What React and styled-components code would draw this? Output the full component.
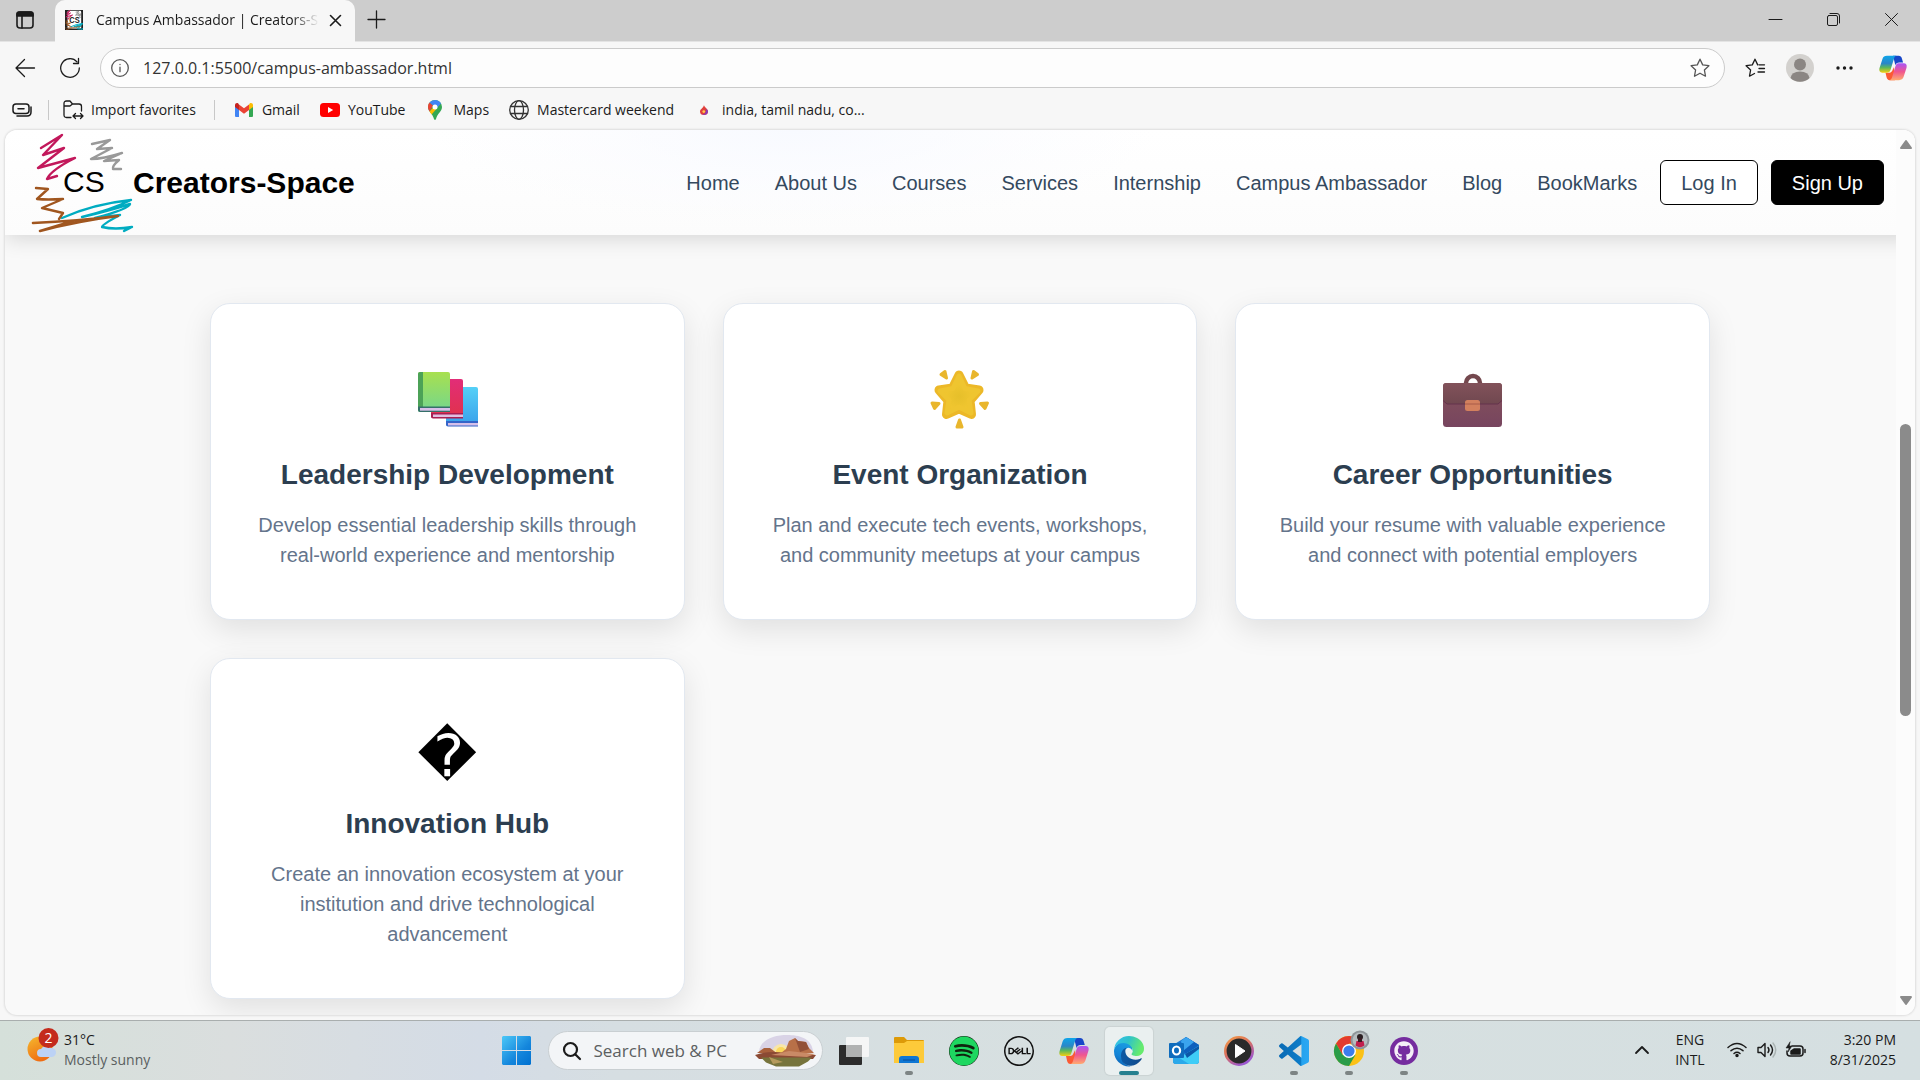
import React from "react";
import styled, { createGlobalStyle } from "styled-components";
import { FaSpotify, FaGithub } from "react-icons/fa";
import { SiDell } from "react-icons/si";

const ui = `"Open Sans", "Noto Sans", sans-serif`;
const arial = `"Liberation Sans", Arial, sans-serif`;

const GlobalStyle = createGlobalStyle`
  *, *::before, *::after { box-sizing: border-box; }
  body { margin: 0; background: #f7f7f7; overflow: hidden; }
  button, input { font: inherit; color: inherit; margin: 0; padding: 0; border: 0; background: none; }
  svg { display: block; flex: none; overflow: visible; }
  a { color: inherit; text-decoration: none; }
  h3, p, ul { margin: 0; padding: 0; }
`;

const Desktop = styled.div`
  height: 100vh;
  display: flex;
  flex-direction: column;
  font-family: ${ui};
  font-size: 14px;
  color: #1b1b1b;
`;

/* ---------- window chrome ---------- */

const TabStrip = styled.header`
  height: 42px;
  flex: none;
  display: flex;
  background: #cdcdcd;
  border-bottom: 1px solid #e4e4e4;
`;

const StripButton = styled.button`
  width: ${(p) => p.$w}px;
  height: 100%;
  padding-bottom: 2px;
  display: flex;
  align-items: center;
  justify-content: center;
`;

const Tab = styled.div`
  width: 300px;
  height: 42px;
  margin-left: ${(p) => p.$left}px;
  padding: 0 14px 2px 10px;
  display: flex;
  align-items: center;
  background: #f7f7f7;
  border-radius: 10px 10px 0 0;
`;

const TabTitle = styled.span`
  flex: 1;
  margin-left: 13px;
  margin-right: 11px;
  line-height: 20px;
  white-space: nowrap;
  overflow: hidden;
  mask-image: linear-gradient(to right, #000 88%, transparent 100%);
`;

const WindowButtons = styled.div`
  margin-left: auto;
  display: flex;
`;

const Toolbar = styled.div`
  flex: none;
  height: 52px;
  padding: 0 5px 0 2px;
  display: flex;
  align-items: center;
  background: #f7f7f7;
`;

const ToolButton = styled.button`
  width: 45px;
  height: 40px;
  display: flex;
  align-items: center;
  justify-content: center;
`;

const ToolGroup = styled.div`
  display: flex;
  margin-right: 3px;
`;

const AddressBar = styled.label`
  flex: 1;
  height: 40px;
  margin: 0 7px 0 8px;
  padding: 0 14px 0 10px;
  display: flex;
  align-items: center;
  gap: 14px;
  background: #fdfdfd;
  border: 1px solid #cbcbcb;
  border-radius: 20px;
`;

const AddressInput = styled.input`
  flex: 1;
  font-size: 16px;
  line-height: 24px;
  color: #333;
  outline: none;
`;

const Bookmarks = styled.nav`
  flex: none;
  height: 36px;
  padding: 0 12px 4px;
  display: flex;
  align-items: center;
  background: #f7f7f7;
`;

const Divider = styled.span`
  width: 1px;
  height: 20px;
  margin: 0 ${(p) => p.$right}px 0 ${(p) => p.$left}px;
  background: #c8c8c8;
`;

const Bookmark = styled.a`
  display: flex;
  align-items: center;
  gap: 8px;
  margin-right: ${(p) => p.$after || 20}px;
  line-height: 20px;
  white-space: nowrap;
`;

const IconSlot = styled.span`
  width: 20px;
  display: flex;
  justify-content: center;
`;

/* ---------- web page ---------- */

const PageFrame = styled.div`
  flex: 1;
  min-height: 0;
  padding: 0 5px 5px;
  background: #f7f7f7;
`;

const Page = styled.div`
  position: relative;
  height: 100%;
  overflow: hidden;
  background: #f9f9f9;
  border-radius: 12px;
  box-shadow: 0 0 2px 1px #dedede;
  font-family: ${arial};
`;

const SiteNav = styled.nav`
  position: relative;
  height: 105px;
  padding: 0 31px 0 28px;
  display: flex;
  align-items: center;
  justify-content: space-between;
  background:
    radial-gradient(ellipse 360px 100px at 790px 0, #f8faff 0, rgba(250, 251, 255, 0.5) 60%, transparent 100%),
    linear-gradient(#fff, #fcfcfc);
  box-shadow: 0 4px 20px rgba(0, 0, 0, 0.14);
`;

const Brand = styled.a`
  display: flex;
  align-items: center;
  font-size: 30px;
  font-weight: 700;
  line-height: 36px;
  color: #000;
`;

const NavSide = styled.div`
  display: flex;
  align-items: center;
  gap: 13px;
  font-size: 20px;
  line-height: 24px;
  color: #34495e;
`;

const NavLinks = styled.ul`
  display: flex;
  gap: 35px;
  margin-right: 10px;
  list-style: none;
`;

const NavButton = styled.button`
  height: 45px;
  padding: 0 20px;
  border: 1px solid #000;
  border-radius: 6px;
  background: ${(p) => (p.$solid ? "#000" : "#fff")};
  color: ${(p) => (p.$solid ? "#fff" : "#34495e")};
`;

const CardGrid = styled.main`
  max-width: 1500px;
  margin: 0 auto;
  padding-top: 68px;
  display: grid;
  grid-template-columns: repeat(3, 1fr);
  gap: 38px;
`;

const Card = styled.article`
  padding: 48px 38px 49px;
  display: flex;
  flex-direction: column;
  align-items: center;
  text-align: center;
  background: #fff;
  border: 1px solid #e2e8f0;
  border-radius: 20px;
  box-shadow: 0 10px 30px rgba(0, 0, 0, 0.1);
`;

const CardGlyph = styled.div`
  padding-top: 18px;
  font-family: "DejaVu Sans", sans-serif;
  font-size: 58px;
  line-height: 62px;
  color: #000;
`;

const CardTitle = styled.h3`
  margin: 21px 0 19px;
  font-size: 28px;
  line-height: 32px;
  color: #2c3e50;
`;

const CardText = styled.p`
  font-size: 20px;
  line-height: 30px;
  color: #64748b;
`;

const Scrollbar = styled.div`
  position: absolute;
  inset: 0 0 0 auto;
  width: 19px;
  padding: 10px 4px;
  display: flex;
  flex-direction: column;
  align-items: center;
  background: #fcfcfc;
`;

const ScrollTrack = styled.div`
  flex: 1;
  width: 11px;
  padding-top: 275px;
`;

const ScrollThumb = styled.div`
  height: 292px;
  border-radius: 6px;
  background: #8b8b8b;
`;

/* ---------- taskbar ---------- */

const Taskbar = styled.footer`
  flex: none;
  height: 60px;
  display: grid;
  grid-template-columns: 1fr auto 1fr;
  align-items: center;
  border-top: 1px solid #a9aeae;
  background: linear-gradient(to right, #d5e0da 0, #dadede 12%, #d4dce6 25%, #d6dee2 32%, #d7e0e0 60%, #d5dfe1 100%);
  line-height: 20px;
`;

const Weather = styled.button`
  justify-self: start;
  padding: 0 0 2px 26px;
  display: flex;
  align-items: center;
  gap: 4px;
  text-align: left;
`;

const Muted = styled.div`
  color: #5a6060;
`;

const TaskGroup = styled.div`
  display: flex;
  align-items: center;
  gap: 7px;
`;

const TaskButton = styled.button`
  width: 48px;
  height: 48px;
  position: relative;
  display: flex;
  align-items: center;
  justify-content: center;
  border-radius: 5px;
  background: ${(p) => (p.$active ? "#eaf0f0" : "none")};
  box-shadow: ${(p) => (p.$active ? "0 0 1px 1px rgba(0,0,0,.06)" : "none")};
  &::after {
    content: "";
    display: ${(p) => (p.$active || p.$open ? "block" : "none")};
    position: absolute;
    bottom: 0;
    width: ${(p) => (p.$active ? 20 : 8)}px;
    height: 4px;
    border-radius: 2px;
    background: ${(p) => (p.$active ? "#26808f" : "#7d8484")};
  }
`;

const TaskSearch = styled.label`
  width: 275px;
  height: 39px;
  padding: 0 5px 0 14px;
  display: flex;
  align-items: center;
  gap: 13px;
  background: #f3f5f7;
  border: 1px solid #c9cfd2;
  border-radius: 20px;
`;

const TaskInput = styled.input`
  flex: 1;
  min-width: 0;
  font-size: 17px;
  line-height: 24px;
  outline: none;
  &::placeholder { color: #5c5f61; opacity: 1; }
`;

const Tray = styled.div`
  justify-self: end;
  padding: 0 24px 2px 0;
  display: flex;
  align-items: center;
`;

const TrayButton = styled.button`
  display: flex;
  align-items: center;
  gap: 10px;
  margin-right: ${(p) => p.$after}px;
`;

const Language = styled.div`
  margin-right: 22px;
  text-align: center;
`;

const Clock = styled.div`
  text-align: right;
`;

/* ---------- drawings ---------- */

const Line = ({ w = 20, h = w, box, sw = 1.3, color = "#1b1b1b", children, fill = "none" }) => (
  <svg width={w} height={h} viewBox={box || `0 0 ${w} ${h}`} fill={fill} stroke={color} strokeWidth={sw} strokeLinecap="round" strokeLinejoin="round" aria-hidden="true">
    {children}
  </svg>
);

const Scribbles = () => (
  <>
    <path d="M8 15L29 2L10 22L31 15L5 35L42 25Q18 37 14 46L24 43" stroke="#c2185b" />
    <path d="M59 11L77 7L64 16L79 15L58 26Q70 26 89 20L71 28L86 27Q79 33 80 36L88 36" stroke="#999" />
    <path d="M29 85Q60 71 98 67Q80 76 49 84Q75 78 97 71Q96 76 62 85L87 82Q68 92 69 94Q82 97 99 94L91 98" stroke="#00acc1" />
    <path d="M3 55L15 56L4 66Q14 67 30 66L9 75L30 80L26 86" stroke="#a0561f" />
    <path d="M0 90Q45 88 85 83Q45 88 7 98L40 88" stroke="#a0561f" strokeWidth="2.6" />
  </>
);

const SiteLogo = () => (
  <svg width="100" height="100" viewBox="0 0 100 100" fill="none" strokeWidth="2.4" strokeLinejoin="round" strokeLinecap="round" aria-hidden="true">
    <Scribbles />
    <text x="30" y="59" fontFamily="Liberation Sans, Arial, sans-serif" fontSize="30" fontWeight="400" fill="#000">CS</text>
  </svg>
);

const Favicon = () => (
  <svg width="18" height="20" viewBox="0 0 100 100" preserveAspectRatio="none" fill="none" strokeWidth="5" aria-hidden="true">
    <rect width="100" height="100" fill="#222" />
    <rect x="14" y="4" width="76" height="88" rx="6" fill="#fff" />
    <Scribbles />
    <text x="24" y="64" fontFamily="Liberation Sans, Arial, sans-serif" fontSize="42" fontWeight="700" fill="#222">CS</text>
  </svg>
);

const Copilot = ({ id, size = 30 }) => (
  <svg width={size} height={size} viewBox="0 0 30 30" aria-hidden="true">
    <defs>
      <linearGradient id={id + "a"} x1="0" y1="0" x2="0" y2="1">
        <stop offset="0" stopColor="#0ea5e9" /><stop offset=".45" stopColor="#2a86c8" /><stop offset=".7" stopColor="#5cb85a" /><stop offset="1" stopColor="#f5cf10" />
      </linearGradient>
      <linearGradient id={id + "b"} x1="0" y1="0" x2="0" y2="1">
        <stop offset="0" stopColor="#a855f7" /><stop offset=".5" stopColor="#f0568f" /><stop offset="1" stopColor="#ffab70" />
      </linearGradient>
    </defs>
    <path d="M15 2h6c2 0 3 1 3.600 3l1.200 4h-4c-2.500 0-3.500 1-4.300 3z" fill="#1746c8" />
    <path d="M7 20h4c2 0 3-1 3.600-3l1.500-3 .9 14H11.500c-2 0-2.800-1-3.400-3z" fill="#fb5a34" />
    <path d="M8.500 2H19c-1.600 0-2.500 1.300-3 3l-3.600 12c-.8 2.400-2 3-4.200 3H3.500C.8 20-.2 18 .5 15.400L3.600 5.500C4.400 3 6 2 8.500 2z" fill={`url(#${id}a)`} />
    <path d="M21.500 28H11c1.600 0 2.500-1.300 3-3l3.600-12c.8-2.400 2-3 4.200-3h4.700c2.700 0 3.700 2 3 4.600l-3.100 9.900c-.8 2.500-2.400 3.500-4.900 3.500z" fill={`url(#${id}b)`} />
  </svg>
);

const Gmail = () => (
  <svg width="18" height="14" viewBox="0 0 18 14" aria-hidden="true">
    <path d="M0 2v11a1 1 0 0 0 1 1h3V5z" fill="#4285f4" />
    <path d="M18 2v11a1 1 0 0 1-1 1h-3V5z" fill="#34a853" />
    <path d="M14 1.500V7l4-3V2c0-1.800-2-2.600-3.300-1.500z" fill="#fbbc04" />
    <path d="M4 7V1.500L9 5.300l5-3.800V7L9 10.700z" fill="#ea4335" />
    <path d="M0 2v2l4 3V1.500L3.300.5C2-.6 0 .2 0 2z" fill="#c5221f" />
  </svg>
);

const YouTube = () => (
  <svg width="20" height="14" viewBox="0 0 20 14" aria-hidden="true">
    <rect width="20" height="14" rx="3.500" fill="#f00" /><path d="M8 4l5.200 3L8 10z" fill="#fff" />
  </svg>
);

const MapsPin = () => (
  <svg width="14" height="20" viewBox="0 0 14 20" aria-hidden="true">
    <path d="M7 0a7 7 0 0 1 7 7c0 4.500-4.500 6-6 12q-1 2-2 0C4.500 13 0 11.500 0 7a7 7 0 0 1 7-7z" fill="#34a853" />
    <path d="M1.500 2.600L5 5.500 1.500 11.500A7 7 0 0 1 0 7c0-1.700.5-3.200 1.500-4.400z" fill="#ea4335" />
    <path d="M7 0c2.600 0 4.800 1.300 6 3.400L8.500 8.500 5 5.500 1.500 2.600A7 7 0 0 1 7 0z" fill="#4285f4" />
    <path d="M1.500 11.400L5.600 7l3 1.800-5 5.600z" fill="#fbbc04" />
    <circle cx="7" cy="7" r="2.500" fill="#fff" />
  </svg>
);

const Flame = () => (
  <svg width="8" height="10" viewBox="0 0 8 10" aria-hidden="true">
    <path d="M4 0c0 2 4 3.500 4 6.500a4 3.500 0 0 1-8 0C0 4 3.500 3 4 0z" fill="#e0403c" />
    <path d="M8 6.500a4 3.500 0 0 1-6 3c3 0 4-2 4-5.500 1 .6 2 1.500 2 2.500z" fill="#8a3ab9" />
    <circle cx="3.800" cy="6.600" r="1.400" fill="#ffc94d" />
  </svg>
);

const Books = () => (
  <svg width="80" height="86" viewBox="0 0 80 86" aria-hidden="true">
    <defs>
      <linearGradient id="bkG" x1="0" y1="0" x2="0" y2="1"><stop offset="0" stopColor="#a8e04f" /><stop offset="1" stopColor="#74d68e" /></linearGradient>
      <linearGradient id="bkR" x1="0" y1="0" x2="0" y2="1"><stop offset="0" stopColor="#e22d78" /><stop offset="1" stopColor="#e0324a" /></linearGradient>
      <linearGradient id="bkB" x1="0" y1="0" x2="0" y2="1"><stop offset="0" stopColor="#55d0f7" /><stop offset="1" stopColor="#389fea" /></linearGradient>
    </defs>
    <rect x="39" y="35" width="32" height="39" rx="2" fill="url(#bkB)" />
    <path d="M39 69h32v5.500H41a2 2 0 0 1-2-2z" fill="#3564c8" /><path d="M41 71h30v2.500H41z" fill="#d5c0ea" />
    <rect x="24" y="27" width="32" height="39" rx="2" fill="url(#bkR)" />
    <path d="M24 61h32v5.500H26a2 2 0 0 1-2-2z" fill="#a91e52" /><path d="M26 62.500h30V65H26z" fill="#e0bfe0" />
    <rect x="11" y="20" width="32" height="40" rx="2" fill="url(#bkG)" /><path d="M13 20h3v35h-5V22a2 2 0 0 1 2-2z" fill="#4ca257" />
    <path d="M11 54.500h32V60H13a2 2 0 0 1-2-2z" fill="#35706a" /><path d="M13 56h30v2.700H13z" fill="#d7bfe8" />
  </svg>
);

const GlowingStar = () => (
  <svg width="80" height="86" viewBox="0 0 80 86" aria-hidden="true">
    <defs>
      <radialGradient id="star" cx=".5" cy=".55" r=".55"><stop offset="0" stopColor="#e6bf2a" /><stop offset=".65" stopColor="#f0c630" /><stop offset="1" stopColor="#ecb828" /></radialGradient>
    </defs>
    <path d="M39 23L45.500 36L59 38L50 48.500L51.500 62.500L39 57L26.500 62.500L28 48.500L19 38L32.500 36Z" fill="#ecb828" stroke="#ecb828" strokeWidth="9" strokeLinejoin="round" />
    <path d="M39 24L45 36.500L58 39L49 48L51 61L39 55L27 61L29 48L20 39L33 36.500Z" fill="url(#star)" stroke="#efc530" strokeWidth="5" strokeLinejoin="round" />
    <g fill="#e9b62c" stroke="#e9b62c" strokeWidth="3" strokeLinejoin="round">
      <path d="M21 22.500l4-3 1.500 6.500z" /><path d="M57.500 22.500l-4-3-1.500 6.500z" /><path d="M12 51l7 .5-4.500 5z" /><path d="M67.500 51l-7 .5 4.500 5z" /><path d="M39.500 68l2.500 7h-5z" />
    </g>
  </svg>
);

const Briefcase = () => (
  <svg width="80" height="86" viewBox="0 0 80 86" aria-hidden="true">
    <defs>
      <linearGradient id="case" x1="0" y1="0" x2="0" y2="1"><stop offset="0" stopColor="#85525a" /><stop offset="1" stopColor="#77455f" /></linearGradient>
      <linearGradient id="flap" x1="0" y1="0" x2="0" y2="1"><stop offset="0" stopColor="#82525a" /><stop offset="1" stopColor="#704850" /></linearGradient>
    </defs>
    <path d="M33 32v-1a7 7 0 0 1 14 0v1" fill="none" stroke="#74484e" strokeWidth="4.500" />
    <rect x="10" y="31" width="59" height="44" rx="3.500" fill="url(#case)" />
    <path d="M13 31h53a3 3 0 0 1 3 3v14l-4 4H14l-4-4V34a3 3 0 0 1 3-3z" fill="url(#flap)" />
    <path d="M10 48.500l4 3.500h51l4-3.500" fill="none" stroke="#65324d" />
    <rect x="32" y="48" width="15" height="11" rx="2.500" fill="#d3805e" /><path d="M32 52h15" stroke="#a85a48" />
  </svg>
);

const WeatherIcon = () => (
  <svg width="34" height="40" viewBox="0 3 34 40" aria-hidden="true">
    <defs><linearGradient id="sun" x1="0" y1="0" x2=".5" y2="1"><stop offset="0" stopColor="#f5b92e" /><stop offset="1" stopColor="#ef6c12" /></linearGradient></defs>
    <circle cx="14" cy="22" r="12.500" fill="url(#sun)" />
    <path d="M15 30a4 4 0 0 1 0-8 6 5 0 0 1 10-1 4.500 4.500 0 0 1 1 9z" fill="#bcd2f5" />
    <circle cx="22.500" cy="11" r="10" fill="#c42b1c" />
    <text x="22.500" y="16" textAnchor="middle" fontFamily="Open Sans, Noto Sans, sans-serif" fontSize="14" fill="#fff">2</text>
  </svg>
);

const WindowsLogo = () => (
  <svg width="29" height="29" viewBox="0 0 29 29" aria-hidden="true">
    <defs><linearGradient id="win" gradientUnits="userSpaceOnUse" x1="0" y1="0" x2="29" y2="29"><stop offset="0" stopColor="#4cc8f8" /><stop offset=".6" stopColor="#1486dc" /><stop offset="1" stopColor="#0070d0" /></linearGradient></defs>
    <path d="M1 0h13v14H0V1zM15 0h13l1 1v13H15zM0 15h14v14H1l-1-1zM15 15h14v13l-1 1H15z" fill="url(#win)" />
  </svg>
);

const Mesa = () => (
  <svg width="62" height="32" viewBox="0 0 62 32" aria-hidden="true">
    <path d="M4 17C5 4 20 0 32 0s25 3 26 17z" fill="#d9d3e6" />
    <circle cx="26" cy="18" r="9" fill="#f8e6a8" /><circle cx="26" cy="17" r="5" fill="#fbd75a" />
    <path d="M31 14l3-8 6-3 3 3 8 1 3 6 5 5H26z" fill="#b87048" /><path d="M40 3l3 3 8 1 3 7-9 3z" fill="#925038" />
    <path d="M2 18l7-5h6l8 6z" fill="#a8603c" />
    <path d="M0 20q15-5 30-2l31 2-3 4H4z" fill="#8b4a34" /><path d="M16 20l18-4 26 3-8 3z" fill="#c98a66" />
    <path d="M6 22.500h51l-4 4-9 5H21l-10-4z" fill="#77743c" /><path d="M14 22l14 5-10 2z" fill="#b59a5c" />
  </svg>
);

const TaskView = () => (
  <svg width="30" height="28" viewBox="0 0 30 28" aria-hidden="true">
    <rect y="8" width="23" height="20" rx="1" fill="#2c2c2c" /><rect x="7" width="23" height="20" rx="1" fill="#f5f6f6" /><rect x="7" y="8" width="16" height="12" fill="#b0b2b2" />
  </svg>
);

const Folder = () => (
  <svg width="30" height="27" viewBox="0 0 30 27" aria-hidden="true">
    <path d="M0 1q0-1 1-1h9l3 3h16q1 0 1 1v6H0z" fill="#dd9a08" /><path d="M0 6h10l3-2h17v22H0z" fill="#fdca3a" />
    <path d="M5 26v-4q0-3 3-3h14q3 0 3 3v4z" fill="#0f77d4" /><path d="M9 23h12" stroke="#0a4d98" />
  </svg>
);

const Edge = () => (
  <svg width="30" height="30" viewBox="0 0 256 256" aria-hidden="true">
    <defs>
      <linearGradient id="e1" x1="0" x2="1"><stop offset="0" stopColor="#0c59a4" /><stop offset="1" stopColor="#114a8b" /></linearGradient>
      <linearGradient id="e2" x1=".6" y1="0" x2=".2" y2="1"><stop offset="0" stopColor="#1b9de2" /><stop offset=".6" stopColor="#1383d6" /><stop offset="1" stopColor="#0c5fb0" /></linearGradient>
      <linearGradient id="e3" x1="0" x2="1" y2=".3"><stop offset="0" stopColor="#35c1f1" /><stop offset=".5" stopColor="#2fc2c9" /><stop offset="1" stopColor="#66eb6e" /></linearGradient>
    </defs>
    <path fill="url(#e2)" d="M105.700 246A79.200 79.200 0 0 1 83 224.700 80.700 80.700 0 0 1 107.800 104.400c3.100-1.500 8.500-4.100 15.600-4a32.500 32.500 0 0 1 25.700 13c4.100 5.400 6.300 11.900 6.400 18.700 0-.2 24.500-79.600-80-79.600C31.600 52.500 0 94.200 0 130.700A130 130 0 0 0 12.200 186a128 128 0 0 0 156.400 67.100 75.900 75.900 0 0 1-62.900-7.100z" />
    <path fill="url(#e1)" d="M231 190.500c-3.400 1.800-6.900 3.400-10.500 4.700a101.500 101.500 0 0 1-35.800 6.400c-47.200 0-88.300-32.400-88.300-74.100.1-11.400 6.400-21.900 16.400-27.300-42.700 1.800-53.600 46.300-53.600 72.300 0 73.800 67.900 81.200 82.600 81.200 7.900 0 19.800-2.300 27-4.600l1.300-.4a128 128 0 0 0 66.600-52.800c1.200-1.900.6-4.300-1.200-5.500-1.300-.8-3-.9-4.500.1z" />
    <path fill="url(#e3)" d="M152.300 148.900c-.9 1-3.400 2.500-3.400 5.600 0 2.600 1.700 5.200 4.800 7.300 14.400 10.100 41.700 8.700 41.800 8.700a60 60 0 0 0 30.500-8.400A61.800 61.800 0 0 0 256 108.900c.3-22.400-8-37.300-11.300-43.900C223.500 23.900 177.800.3 128 .3A128 128 0 0 0 0 126.500c.5-36.500 36.800-66 80-66 3.500 0 23.500.3 42 10.100 16.300 8.500 24.900 18.900 30.800 29.200 6.200 10.600 7.300 24.100 7.300 29.500 0 5.400-2.700 13.300-7.800 19.600z" />
  </svg>
);

const Outlook = () => (
  <svg width="30" height="27" viewBox="0 0 30 27" aria-hidden="true">
    <path d="M4 8L17 0l13 8v16q0 3-3 3H7q-3 0-3-3z" fill="#1a78d2" /><path d="M17 0l13 8-13 9-9-8z" fill="#0d5fbd" /><path d="M12 4l5-4 8 5-11 9z" fill="#3ba4ee" />
    <path d="M30 9v15q0 3-3 3H7l-3-3z" fill="#3fcdf7" /><path d="M4 17l16 10H7q-3 0-3-3z" fill="#2ba9ea" /><path d="M16 17L30 9v3L18 21z" fill="#0c57a8" />
    <rect y="6" width="15" height="15" rx="1" fill="#0f6cbd" /><ellipse cx="7.500" cy="13.500" rx="3.600" ry="4" fill="none" stroke="#fff" strokeWidth="2.200" />
  </svg>
);

const MediaPlayer = () => (
  <svg width="30" height="30" viewBox="0 0 30 30" aria-hidden="true">
    <defs><linearGradient id="mp" x1="0" y1="0" x2=".6" y2="1"><stop offset="0" stopColor="#f39a45" /><stop offset=".5" stopColor="#d9705f" /><stop offset="1" stopColor="#9c58d0" /></linearGradient></defs>
    <circle cx="15" cy="15" r="13.700" fill="#2a2a2a" stroke="url(#mp)" strokeWidth="2.600" /><path d="M11.500 8.500L21 15l-9.500 6.500z" fill="#fff" stroke="#fff" strokeLinejoin="round" />
  </svg>
);

const VsCode = () => (
  <svg width="30" height="30" viewBox="0 0 24 24" aria-hidden="true">
    <defs><linearGradient id="vs" x1="0" x2="1"><stop offset="0" stopColor="#0a6ab4" /><stop offset=".72" stopColor="#0c7cc8" /><stop offset=".76" stopColor="#26a3ee" /><stop offset="1" stopColor="#2ba7f3" /></linearGradient></defs>
    <path fill="url(#vs)" d="M23.150 2.587L18.210.21a1.494 1.494 0 0 0-1.705.29l-9.460 8.630-4.120-3.128a.999.999 0 0 0-1.276.057L.327 7.261A1 1 0 0 0 .326 8.740L3.899 12 .326 15.260a1 1 0 0 0 .001 1.479L1.650 17.940a.999.999 0 0 0 1.276.057l4.120-3.128 9.460 8.630a1.492 1.492 0 0 0 1.704.290l4.942-2.377A1.500 1.500 0 0 0 24 20.060V3.939a1.500 1.500 0 0 0-.850-1.352zm-5.146 14.861L10.826 12l7.178-5.448v10.896z" />
  </svg>
);

const Chrome = () => (
  <svg width="30" height="30" viewBox="0 0 30 30" aria-hidden="true">
    <circle cx="15" cy="15" r="15" fill="#fbc116" />
    <path d="M28 7.500H15l-6.500 11.300L2 7.500A15 15 0 0 1 28 7.500z" fill="#e33b2e" />
    <path d="M2 7.500A15 15 0 0 0 15 30l6.500-11.300H8.500z" fill="#2a9c48" />
    <circle cx="15" cy="15" r="7" fill="#fff" /><circle cx="15" cy="15" r="5.600" fill="#3b7ded" />
    <circle cx="26" cy="4" r="9.500" fill="#8f9599" /><circle cx="26" cy="4" r="7.500" fill="#b6bcbf" />
    <circle cx="26" cy="1" r="3" fill="#2b2023" /><path d="M22.500 5h7l1 4.500q-4.500 3.500-9 0z" fill="#c01f4c" /><path d="M24 2h4v4h-4z" fill="#3a1a22" />
  </svg>
);

const Github = styled(FaGithub)`
  padding: 4px;
  border-radius: 50%;
  background: #752c9f;
  color: #f4eef7;
`;

const SpotifyDisc = styled(FaSpotify)`
  border-radius: 50%;
  background: #10240f;
  color: #1ed760;
`;

/* ---------- data ---------- */

const links = ["Home", "About Us", "Courses", "Services", "Internship", "Campus Ambassador", "Blog", "BookMarks"];

const cards = [
  { icon: <Books />, title: "Leadership Development", text: "Develop essential leadership skills through real-world experience and mentorship" },
  { icon: <GlowingStar />, title: "Event Organization", text: "Plan and execute tech events, workshops, and community meetups at your campus" },
  { icon: <Briefcase />, title: "Career Opportunities", text: "Build your resume with valuable experience and connect with potential employers" },
  { icon: <CardGlyph>{"\uFFFD"}</CardGlyph>, title: "Innovation Hub", text: "Create an innovation ecosystem at your institution and drive technological advancement" },
];

const bookmarks = [
  { name: "Gmail", icon: <Gmail /> },
  { name: "YouTube", icon: <YouTube /> },
  { name: "Maps", icon: <MapsPin /> },
  {
    name: "Mastercard weekend",
    icon: (
      <Line color="#333"><circle cx="10" cy="10" r="9.300" /><ellipse cx="10" cy="10" rx="4.500" ry="9.300" /><path d="M1.500 6.500h17M1.500 13.500h17" /></Line>
    ),
  },
  { name: "india, tamil nadu, co...", icon: <Flame /> },
];

const apps = [
  { name: "Task view", icon: <TaskView /> },
  { name: "File Explorer", icon: <Folder />, open: true },
  { name: "Spotify", icon: <SpotifyDisc size={30} /> },
  { name: "Dell", icon: <SiDell size={30} color="#111" /> },
  { name: "Copilot", icon: <Copilot id="ct" /> },
  { name: "Edge", icon: <Edge />, active: true },
  { name: "Outlook", icon: <Outlook /> },
  { name: "Media Player", icon: <MediaPlayer /> },
  { name: "Visual Studio Code", icon: <VsCode />, open: true },
  { name: "Chrome", icon: <Chrome />, open: true },
  { name: "GitHub Desktop", icon: <Github size={28} />, open: true },
];

const starPath = "M10 1.200l2.700 5.700 6.200.8-4.500 4.300 1.100 6.200-5.500-3-5.500 3 1.100-6.200L1.100 7.700l6.200-.8z";

export default function App() {
  return (
    <Desktop>
      <GlobalStyle />
      <TabStrip>
        <StripButton $w={50} aria-label="Tab actions">
          <Line w={18} sw={1.600}><rect x="1" y="1" width="16" height="16" rx="3" /><path d="M1 3q0-2 2-2h12q2 0 2 2v2H1z" fill="#1b1b1b" /><path d="M6 5v12" /></Line>
        </StripButton>
        <Tab $left={5}>
          <Favicon />
          <TabTitle>Campus Ambassador | Creators-Space</TabTitle>
          <button aria-label="Close tab"><Line w={11} sw={1.600}><path d="M.5.5l10 10M10.500.5l-10 10" /></Line></button>
        </Tab>
        <StripButton $w={43} aria-label="New tab"><Line w={17}><path d="M8.500 0v17M0 8.500h17" /></Line></StripButton>
        <WindowButtons>
          <StripButton $w={58} aria-label="Minimize"><Line w={13} sw={1}><path d="M0 6.500h13" /></Line></StripButton>
          <StripButton $w={58} aria-label="Restore"><Line w={13} sw={1}><rect x=".5" y="2.500" width="10" height="10" rx="1.500" /><path d="M3 .5h7q2.500 0 2.500 2.500v7" /></Line></StripButton>
          <StripButton $w={58} aria-label="Close"><Line w={13} sw={1}><path d="M.5.5l12 12M12.500.5l-12 12" /></Line></StripButton>
        </WindowButtons>
      </TabStrip>

      <Toolbar>
        <ToolButton aria-label="Back"><Line><path d="M19.500 10H1M9.500 1.500L1 10l8.500 8.500" /></Line></ToolButton>
        <ToolButton aria-label="Refresh"><Line><path d="M19.300 10A9.300 9.300 0 1 1 17 3.900M18.500.5v5h-5" /></Line></ToolButton>
        <AddressBar>
          <Line w={18} color="#555"><circle cx="9" cy="9" r="8.300" /><path d="M9 8.200v4.500M9 5.300v.2" /></Line>
          <AddressInput aria-label="Address" defaultValue="127.0.0.1:5500/campus-ambassador.html" />
          <button aria-label="Add to favorites"><Line color="#555"><path d={starPath} /></Line></button>
        </AddressBar>
        <ToolGroup>
          <ToolButton aria-label="Favorites"><Line><path d="M12.700 6.900L10 1.200 7.300 6.900l-6.200.8 4.500 4.300-1.100 6.200 5-2.700M14 10.500h5.500M13 14h6.500M14 6.800h5.500" /></Line></ToolButton>
          <ToolButton aria-label="Profile">
            <svg width="28" height="28" viewBox="0 0 28 28" aria-hidden="true">
              <circle cx="14" cy="14" r="14" fill="#d3d1ce" /><circle cx="14" cy="10.500" r="6" fill="#8b8683" /><path d="M4.500 24q1-6.500 9.500-6.500t9.500 6.500a14 14 0 0 1-19 0z" fill="#8b8683" />
            </svg>
          </ToolButton>
          <ToolButton aria-label="Settings and more"><Line w={17} h={4} sw={0} fill="#1b1b1b"><circle cx="2" cy="2" r="1.700" /><circle cx="8.500" cy="2" r="1.700" /><circle cx="15" cy="2" r="1.700" /></Line></ToolButton>
        </ToolGroup>
        <ToolButton aria-label="Copilot"><Copilot id="cb" size={28} /></ToolButton>
      </Toolbar>

      <Bookmarks aria-label="Favorites bar">
        <button aria-label="Collections"><Line w={20} h={14} sw={1.500}><rect x="1" y="1" width="16" height="9.500" rx="3" /><path d="M6 5.700h6M19 4v5q0 4-4 4H5" /></Line></button>
        <Divider $left={16} $right={14} />
        <Bookmark href="#import" $after={18}>
          <Line><path d="M8 17.500H3.500Q1 17.500 1 15V3.500Q1 1 3.500 1H7l2.500 3H16q2.500 0 2.500 2.500V11M1 6h6l2.500-2M10.500 16h9M12.500 13.500L10 16l2.500 2.500M17.500 13.500L20 16l-2.500 2.500" /></Line>
          Import favorites
        </Bookmark>
        <Divider $left={0} $right={19} />
        {bookmarks.map((b) => (
          <Bookmark key={b.name} href="#bookmark"><IconSlot>{b.icon}</IconSlot>{b.name}</Bookmark>
        ))}
      </Bookmarks>

      <PageFrame>
        <Page>
          <SiteNav>
            <Brand href="#home"><SiteLogo />Creators-Space</Brand>
            <NavSide>
              <NavLinks>{links.map((l) => <li key={l}><a href="#nav">{l}</a></li>)}</NavLinks>
              <NavButton>Log In</NavButton>
              <NavButton $solid>Sign Up</NavButton>
            </NavSide>
          </SiteNav>
          <CardGrid>
            {cards.map((c) => (
              <Card key={c.title}>
                {c.icon}
                <CardTitle>{c.title}</CardTitle>
                <CardText>{c.text}</CardText>
              </Card>
            ))}
          </CardGrid>
          <Scrollbar>
            <Line w={12} h={9} sw={2} color="#8b8b8b" fill="#8b8b8b"><path d="M6 1l5 7H1z" /></Line>
            <ScrollTrack><ScrollThumb /></ScrollTrack>
            <Line w={12} h={9} sw={2} color="#8b8b8b" fill="#8b8b8b"><path d="M6 8l5-7H1z" /></Line>
          </Scrollbar>
        </Page>
      </PageFrame>

      <Taskbar>
        <Weather>
          <WeatherIcon />
          <div><div>31°C</div><Muted>Mostly sunny</Muted></div>
        </Weather>
        <TaskGroup>
          <TaskButton aria-label="Start"><WindowsLogo /></TaskButton>
          <TaskSearch>
            <Line w={18} sw={2.200}><circle cx="7.500" cy="7.500" r="6.500" /><path d="M12.500 12.500l4.500 4.500" /></Line>
            <TaskInput aria-label="Search" placeholder="Search web & PC" />
            <Mesa />
          </TaskSearch>
          {apps.map((a) => (
            <TaskButton key={a.name} aria-label={a.name} $open={a.open} $active={a.active}>{a.icon}</TaskButton>
          ))}
        </TaskGroup>
        <Tray>
          <TrayButton $after={26} aria-label="Hidden icons"><Line w={14} h={8} sw={1.800}><path d="M1 7l6-6 6 6" /></Line></TrayButton>
          <Language>ENG<br />INTL</Language>
          <TrayButton $after={24} aria-label="Network, sound and battery">
            <Line w={20} h={15} sw={1.500}><path d="M1 5.500q9-8 18 0M4 8.700q6-5 12 0M7 11.500q3-2.500 6 0" /><circle cx="10" cy="13.500" r="1" fill="#1b1b1b" /></Line>
            <Line w={19} h={16} sw={1.400}><path d="M1 5.500h3l4-4v13l-4-4H1zM11 5.500q2 2.500 0 5M13.500 3q4 5 0 10" /><path d="M16 1q5.500 7 0 14" stroke="#aab3b3" /></Line>
            <Line w={20} h={16} sw={1.500}><path d="M6 4h8q3 0 3 3v4q0 3-3 3H4q-3 0-3-3V9M19 7.500v3" /><path d="M8 7h6v5H5V9z" fill="#1b1b1b" /><path d="M4 0L0 6h3L2 10l4-6H3.500z" fill="#1b1b1b" strokeWidth=".5" /></Line>
          </TrayButton>
          <Clock>3:20 PM<br />8/31/2025</Clock>
        </Tray>
      </Taskbar>
    </Desktop>
  );
}
